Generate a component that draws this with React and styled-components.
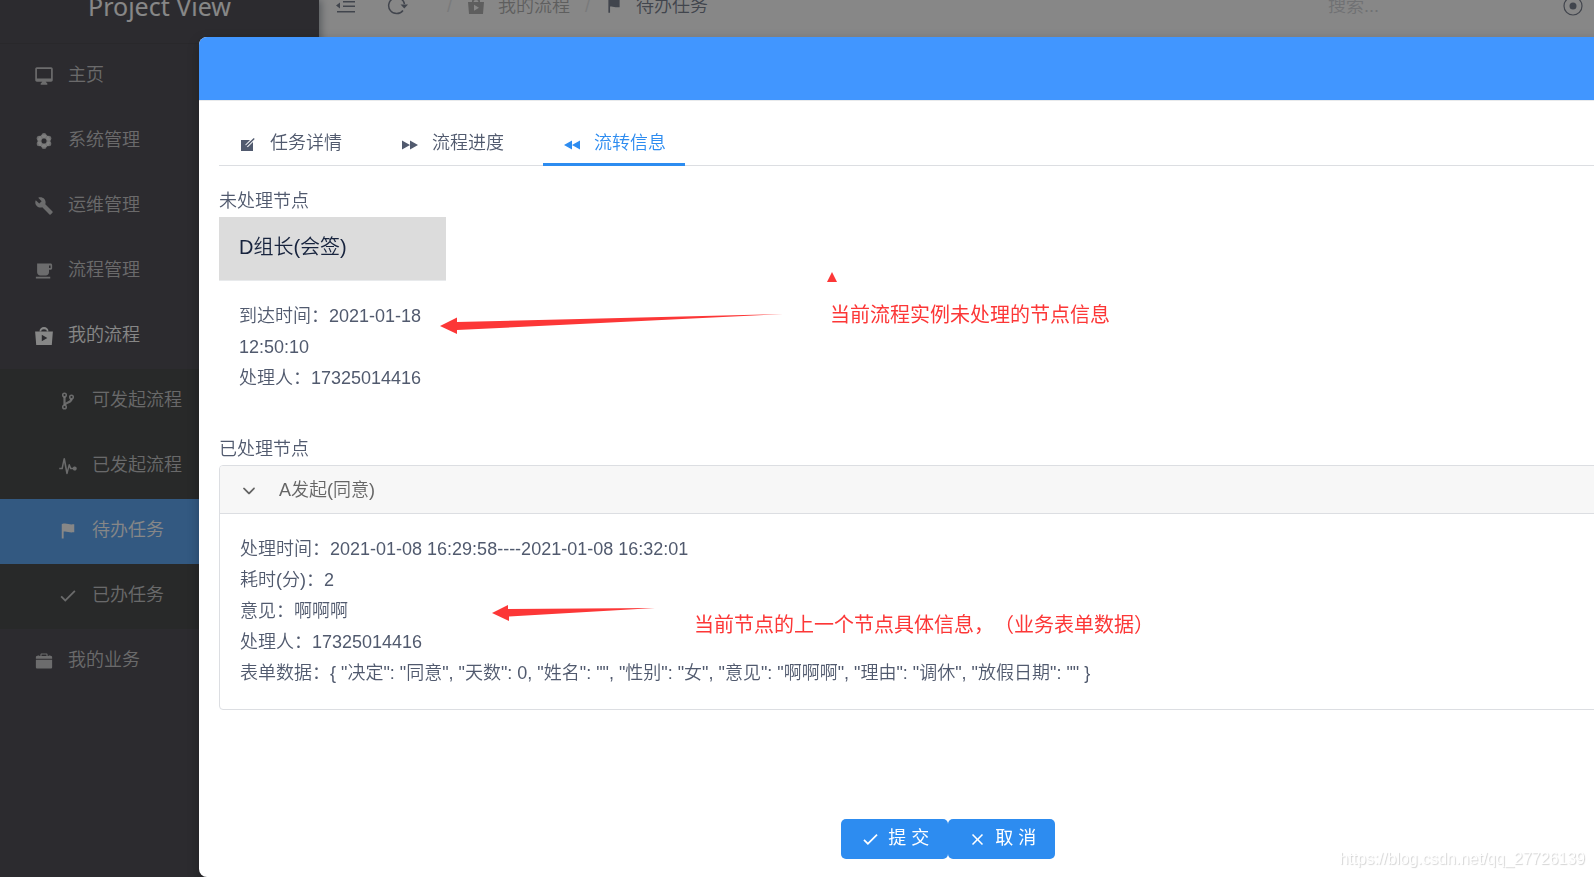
import React from 'react';
import styled, { createGlobalStyle } from 'styled-components';
import {
  IoMdDesktop,
  IoMdBuild,
  IoMdCafe,
  IoMdPulse,
  IoMdFlag,
  IoMdCheckmark,
  IoMdClose,
  IoIosBriefcase,
  IoIosArrowDown,
} from 'react-icons/io';

const GlobalStyle = createGlobalStyle`
  * {
    box-sizing: border-box;
  }
  body {
    margin: 0;
    overflow: hidden;
    color: #515a6e;
    font-family: 'Liberation Sans', 'Noto Sans CJK SC', sans-serif;
    font-size: 18px;
    font-weight: 350;
    line-height: 31px;
    text-spacing-trim: space-all;
  }
  button, input {
    font: inherit;
  }
`;

const Page = styled.div`
  display: flex;
  min-height: 100vh;
`;

const Sidebar = styled.aside`
  width: 319px;
  flex-shrink: 0;
  z-index: 1;
  background: #1c1b24;
  box-shadow: 2px 0 8px rgba(0, 21, 41, 0.5);
`;

const Brand = styled.div`
  height: 44px;
  border-bottom: 1px solid #14131a;
  color: #fff;
  font-family: 'Noto Sans', sans-serif;
  font-size: 25px;
  font-weight: 400;
  line-height: 12px;
  text-align: center;
`;

const SubMenu = styled.div`
  background: #121516;
`;

const MenuLink = styled.a`
  display: flex;
  align-items: center;
  gap: 14px;
  height: 65px;
  padding: 0 20px 2px ${(p) => (p.$nested ? 58 : 34)}px;
  color: ${(p) => (p.$bright ? '#fff' : 'rgba(255, 255, 255, 0.7)')};
  background: ${(p) => (p.$active ? '#2d8cf0' : 'transparent')};
  text-decoration: none;

  svg {
    width: 20px;
    height: 20px;
  }
`;

const Content = styled.div`
  flex: 1;
  background: #fff;
`;

const TopBar = styled.header`
  display: flex;
  align-items: center;
  justify-content: space-between;
  height: 12px;
  padding: 0 10px 0 16px;
`;

const BarGroup = styled.div`
  display: flex;
  align-items: center;
  gap: 30px;
`;

const IconButton = styled.button`
  display: flex;
  padding: 0;
  border: none;
  background: none;
  color: #515a6e;

  svg {
    width: 22px;
    height: 22px;
  }
`;

const Breadcrumb = styled.nav`
  display: flex;
  align-items: center;
  gap: 15px;
  margin-left: 8px;
`;

const Separator = styled.span`
  color: #dcdee2;
`;

const Crumb = styled.a`
  display: flex;
  align-items: center;
  gap: 13px;
  color: ${(p) => (p.$current ? '#515a6e' : '#999')};
  text-decoration: none;

  svg {
    width: 18px;
    height: 18px;
  }
`;

const SearchInput = styled.input`
  width: 204px;
  padding: 0;
  border: none;
  background: none;
  &::placeholder {
    color: #c5c8ce;
  }
`;

const Mask = styled.div`
  position: fixed;
  inset: 0;
  z-index: 10;
  display: flex;
  overflow: hidden;
  padding: 37px 0 0 199px;
  background: rgba(55, 55, 55, 0.6);
`;

const Modal = styled.section`
  display: flex;
  flex-direction: column;
  flex: 0 0 94vw;
  overflow: hidden;
  border-radius: 8px;
  background: #fff;
  box-shadow: 0 4px 12px rgba(0, 0, 0, 0.25);
`;

const ModalHeader = styled.div`
  height: 64px;
  flex-shrink: 0;
  background: #4196ff;
  border-bottom: 1px solid #e8eaec;
`;

const ModalBody = styled.div`
  flex: 1;
  padding: 20px;
`;

const ModalFooter = styled.div`
  display: flex;
  justify-content: center;
  padding: 18px;
`;

const Tabs = styled.div`
  display: flex;
  gap: 20px;
  height: 45px;
  margin-bottom: 20px;
  border-bottom: 1px solid #dcdee2;
`;

const Tab = styled.button`
  display: flex;
  align-items: center;
  gap: 13px;
  height: 45px;
  padding: 3px 19px 0 20px;
  border: none;
  border-bottom: 3px solid ${(p) => (p.$active ? '#2d8cf0' : 'transparent')};
  background: none;
  color: ${(p) => (p.$active ? '#2d8cf0' : 'inherit')};

  svg {
    width: 18px;
    height: 18px;
  }
`;

const SectionTitle = styled.div`
  height: 31px;
`;

const NodeCard = styled.div`
  width: 227px;
  margin-bottom: 20px;
`;

const NodeName = styled.div`
  height: 64px;
  padding: 15px 20px;
  border-bottom: 1px solid #e8eaec;
  background: #dcdcdc;
  color: #17233d;
  font-size: 20px;
`;

const NodeInfo = styled.div`
  padding: 20px;
`;

const Panel = styled.div`
  overflow: hidden;
  border: 1px solid #dcdee2;
  border-radius: 4px;
`;

const PanelHeader = styled.button`
  display: flex;
  align-items: center;
  gap: 21px;
  width: 100%;
  height: 48px;
  padding: 2px 20px 0;
  border: none;
  border-bottom: 1px solid #dcdee2;
  background: #f7f7f7;
  color: #666;

  svg {
    width: 18px;
    height: 18px;
  }
`;

const PanelBody = styled.div`
  padding: 20px;
`;

const ActionButton = styled.button`
  display: flex;
  align-items: center;
  gap: 8px;
  height: 40px;
  padding: 0 19px 2px 20px;
  border: none;
  border-radius: 5px;
  background: #2d8cf0;
  color: #fff;
  font-weight: 400;

  svg {
    width: 19px;
    height: 19px;
    margin-top: 2px;
  }
`;

/* red notes drawn over the dialog */
const Note = styled.div`
  position: fixed;
  z-index: 20;
  left: ${(p) => p.$x}px;
  top: ${(p) => p.$y}px;
  color: #fc3737;
  font-size: 20px;
  font-weight: 400;
  white-space: nowrap;
`;

const NoteDrawing = styled.svg`
  position: fixed;
  z-index: 20;
  left: 430px;
  top: 260px;
  pointer-events: none;
`;

const Watermark = styled.div`
  position: fixed;
  z-index: 30;
  right: 9px;
  bottom: 3px;
  color: #fff;
  font-size: 16px;
  text-shadow: 1px 1px 1px #d4d4d4;
`;

const BagIcon = () => (
  <svg viewBox="0 0 18 18" fill="currentColor">
    <path d="M5 5V4.500a4 3.500 0 0 1 8 0V5h-1.500a2.500 2 0 0 0-5 0z" />
    <path fillRule="evenodd" d="M1 5h16l-1 12H2zM7 7.800v6l5-3z" />
  </svg>
);

const GearIcon = () => (
  <svg viewBox="0 0 20 20">
    <g fill="currentColor">
      <circle cx="10" cy="10" r="6.500" />
      <circle cx="10" cy="4.500" r="2.500" />
      <circle cx="14.800" cy="7.200" r="2.500" />
      <circle cx="14.800" cy="12.800" r="2.500" />
      <circle cx="10" cy="15.500" r="2.500" />
      <circle cx="5.200" cy="12.800" r="2.500" />
      <circle cx="5.200" cy="7.200" r="2.500" />
    </g>
    <circle cx="10" cy="10" r="2.500" fill="#1c1b24" />
  </svg>
);

const BranchIcon = () => (
  <svg viewBox="0 0 20 20" fill="none" stroke="currentColor">
    <circle cx="6.500" cy="4" r="1.800" strokeWidth="1.500" />
    <circle cx="6.500" cy="16" r="1.800" strokeWidth="1.500" />
    <circle cx="13.500" cy="6" r="1.800" strokeWidth="1.500" />
    <path d="M6.500 6v8M13.500 8c0 4-6 3-6.500 6" strokeWidth="2.200" />
  </svg>
);

const OutdentIcon = () => (
  <svg viewBox="0 0 22 22" fill="currentColor">
    <path d="M1 10.500l4-3v6zM8 6h12v1.500H8zM8 10.500h12V12H8zM2 16h18v1.500H2z" />
  </svg>
);

const RefreshIcon = () => (
  <svg viewBox="0 0 22 22">
    <path d="M17.500 9A8 8 0 1 0 16 15.500" fill="none" stroke="currentColor" strokeWidth="1.500" />
    <path d="M13.500 9.500h7.500l-3.700 4z" fill="currentColor" />
  </svg>
);

const TargetIcon = () => (
  <svg viewBox="0 0 22 22">
    <circle cx="11" cy="11" r="9" fill="none" stroke="currentColor" strokeWidth="1.200" />
    <circle cx="11" cy="11" r="3.500" fill="currentColor" />
  </svg>
);

const EditIcon = () => (
  <svg viewBox="0 0 18 18">
    <path d="M2 5h12v11H2z" fill="currentColor" />
    <path d="M7.500 11l8-8" stroke="#fff" strokeWidth="3.500" />
    <path d="M6.500 12l.6-2L14.800 3l.9.900-7.300 7.300z" fill="currentColor" />
  </svg>
);

const ForwardIcon = () => (
  <svg viewBox="0 0 18 18" fill="currentColor">
    <path d="M1 5.500l8 4.500-8 4.500zM9 5.500l8 4.500-8 4.500z" />
  </svg>
);

const RewindIcon = () => (
  <svg viewBox="0 0 18 18" fill="currentColor">
    <path d="M9 5.500L1 10l8 4.500zM17 5.500L9 10l8 4.500z" />
  </svg>
);

const mainMenu = [
  { icon: IoMdDesktop, label: '主页' },
  { icon: GearIcon, label: '系统管理' },
  { icon: IoMdBuild, label: '运维管理' },
  { icon: IoMdCafe, label: '流程管理' },
  { icon: BagIcon, label: '我的流程', bright: true },
];

const subMenu = [
  { icon: BranchIcon, label: '可发起流程' },
  { icon: IoMdPulse, label: '已发起流程' },
  { icon: IoMdFlag, label: '待办任务', active: true },
  { icon: IoMdCheckmark, label: '已办任务' },
];

const tabs = [
  { icon: EditIcon, label: '任务详情' },
  { icon: ForwardIcon, label: '流程进度' },
  { icon: RewindIcon, label: '流转信息', active: true },
];

const history = [
  '处理时间：2021-01-08 16:29:58----2021-01-08 16:32:01',
  '耗时(分)：2',
  '意见：啊啊啊',
  '处理人：17325014416',
  '表单数据：{ "决定": "同意", "天数": 0, "姓名": "", "性别": "女", "意见": "啊啊啊", "理由": "调休", "放假日期": "" }',
];

function MenuItem({ item, nested }) {
  const Icon = item.icon;
  return (
    <MenuLink href="#" $nested={nested} $active={item.active} $bright={item.bright || item.active}>
      <Icon />
      {item.label}
    </MenuLink>
  );
}

function App() {
  return (
    <>
      <GlobalStyle />
      <Page>
        <Sidebar>
          <Brand>Project View</Brand>
          {mainMenu.map((item) => (
            <MenuItem key={item.label} item={item} />
          ))}
          <SubMenu>
            {subMenu.map((item) => (
              <MenuItem key={item.label} item={item} nested />
            ))}
          </SubMenu>
          <MenuItem item={{ icon: IoIosBriefcase, label: '我的业务' }} />
        </Sidebar>
        <Content>
          <TopBar>
            <BarGroup>
              <IconButton aria-label="收起菜单"><OutdentIcon /></IconButton>
              <IconButton aria-label="刷新"><RefreshIcon /></IconButton>
              <Breadcrumb>
                <Separator>/</Separator>
                <Crumb href="#"><BagIcon />我的流程</Crumb>
                <Separator>/</Separator>
                <Crumb href="#" $current><IoMdFlag />待办任务</Crumb>
              </Breadcrumb>
            </BarGroup>
            <BarGroup>
              <SearchInput aria-label="搜索" placeholder="搜索..." />
              <IconButton aria-label="定位"><TargetIcon /></IconButton>
            </BarGroup>
          </TopBar>
        </Content>
      </Page>

      <Mask>
        <Modal role="dialog">
          <ModalHeader />
          <ModalBody>
            <Tabs role="tablist">
              {tabs.map(({ icon: Icon, label, active }) => (
                <Tab key={label} role="tab" aria-selected={!!active} $active={active}>
                  <Icon />
                  {label}
                </Tab>
              ))}
            </Tabs>
            <SectionTitle>未处理节点</SectionTitle>
            <NodeCard>
              <NodeName>D组长(会签)</NodeName>
              <NodeInfo>
                <div>到达时间：2021-01-18 12:50:10</div>
                <div>处理人：17325014416</div>
              </NodeInfo>
            </NodeCard>
            <SectionTitle>已处理节点</SectionTitle>
            <Panel>
              <PanelHeader aria-expanded="true">
                <IoIosArrowDown />
                A发起(同意)
              </PanelHeader>
              <PanelBody>
                {history.map((line) => (
                  <div key={line}>{line}</div>
                ))}
              </PanelBody>
            </Panel>
          </ModalBody>
          <ModalFooter>
            <ActionButton><IoMdCheckmark />提 交</ActionButton>
            <ActionButton><IoMdClose />取 消</ActionButton>
          </ModalFooter>
        </Modal>
      </Mask>

      <NoteDrawing width="420" height="370" fill="#fc3737">
        <path d="M402 12l5 10h-10z" />
        <path d="M10 66l17-8.500v4.500L353 54 27 70v4z" />
        <path d="M62 353l16-8v4l147-1L79 356.500v4.500z" />
      </NoteDrawing>
      <Note $x={830} $y={300}>当前流程实例未处理的节点信息</Note>
      <Note $x={694} $y={610}>当前节点的上一个节点具体信息，（业务表单数据）</Note>
      <Watermark>https://blog.csdn.net/qq_27726139</Watermark>
    </>
  );
}

export default App;
